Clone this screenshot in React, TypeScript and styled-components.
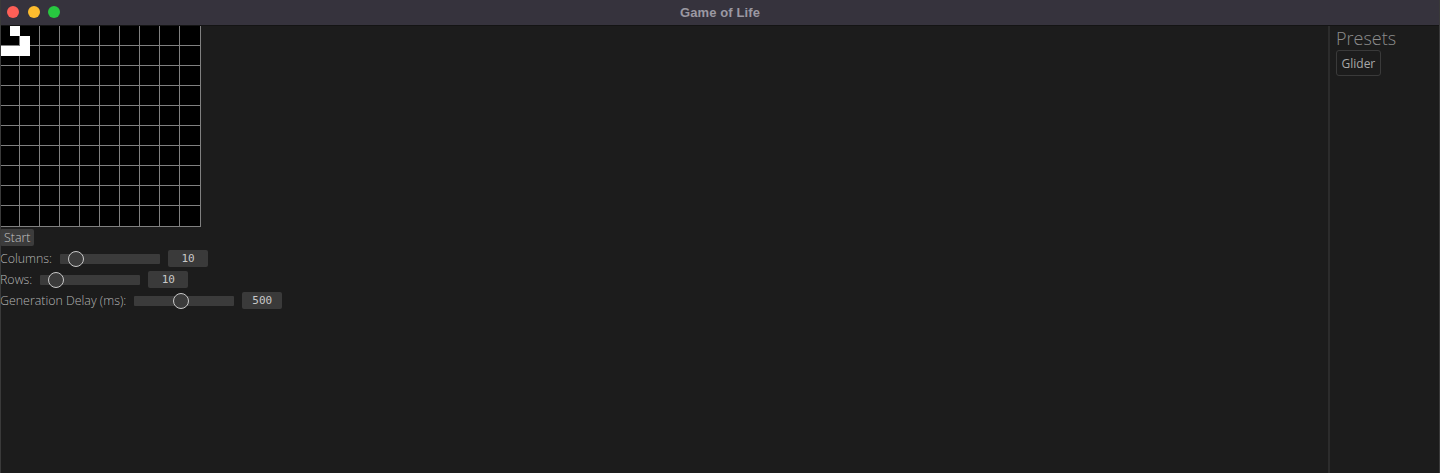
import React, { useState } from "react";
import styled, { createGlobalStyle } from "styled-components";

const GlobalStyle = createGlobalStyle`
  html, body { margin: 0; padding: 0; background: #1c1c1c; }
  body { font-family: "Open Sans", "Noto Sans", sans-serif; }
  * { box-sizing: border-box; }
`;

const Window = styled.div`
  position: relative;
  width: 1440px;
  height: 473px;
  display: flex;
  flex-direction: column;
  background: #1c1c1c;
  overflow: hidden;
  &::after {
    content: "";
    position: absolute;
    inset: 0;
    border-left: 1px solid #3a3a3a;
    border-right: 1px solid #3a3a3a;
    pointer-events: none;
  }
`;

const TitleBar = styled.div`
  position: relative;
  height: 26px;
  flex: none;
  display: flex;
  align-items: center;
  justify-content: center;
  background: #36333d;
  border-bottom: 1px solid #141414;
`;

const Lights = styled.div`
  position: absolute;
  left: 7px;
  top: 6px;
  display: flex;
  gap: 8.6px;
`;

const Light = styled.span<{ $c: string }>`
  width: 12px;
  height: 12px;
  border-radius: 50%;
  background: ${(p) => p.$c};
`;

const Title = styled.div`
  font-family: "Liberation Sans", Arial, sans-serif;
  font-weight: 700;
  font-size: 13px;
  color: #9b98a2;
  letter-spacing: 0.1px;
`;

const Body = styled.div`
  flex: 1;
  display: flex;
  min-height: 0;
`;

const Main = styled.div`
  flex: 1;
  display: flex;
  flex-direction: column;
  align-items: flex-start;
`;

const Sidebar = styled.div`
  width: 112px;
  flex: none;
  border-left: 2px solid #2c2c2c;
  padding: 0 0 0 6px;
  display: flex;
  flex-direction: column;
  align-items: flex-start;
`;

const SideTitle = styled.div`
  font-size: 18px;
  font-weight: 300;
  color: #8c8c8c;
  line-height: 24px;
  margin-top: 0px;
`;

const PresetButton = styled.button`
  margin-top: 0px;
  height: 26px;
  padding: 0 4.5px;
  background: transparent;
  border: 1px solid #3a3a3a;
  border-radius: 3px;
  color: #a8a8a8;
  font-family: inherit;
  font-size: 12px;
  font-weight: 400;
`;

const GridSvg = styled.svg`
  display: block;
  flex: none;
`;

const StartButton = styled.button`
  margin-top: 2px;
  height: 17px;
  padding: 0 4px;
  background: #3c3c3c;
  border: none;
  border-radius: 2px;
  color: #c4c4c4;
  font-family: inherit;
  font-size: 12.4px;
  line-height: 17px;
  font-weight: 300;
`;

const Controls = styled.div`
  margin-top: 4px;
  display: flex;
  flex-direction: column;
  gap: 4px;
`;

const Row = styled.div`
  display: flex;
  align-items: center;
  gap: 8px;
  height: 17px;
`;

const Label = styled.span`
  font-size: 12.4px;
  font-weight: 300;
  color: #b4b4b4;
  white-space: nowrap;
`;

const Slider = styled.input`
  -webkit-appearance: none;
  appearance: none;
  width: 100px;
  height: 10px;
  margin: 0;
  background: #3b3b3b;
  border-radius: 1px;
  outline: none;
  &::-webkit-slider-thumb {
    -webkit-appearance: none;
    appearance: none;
    width: 16px;
    height: 16px;
    border-radius: 50%;
    background: #3b3b3b;
    border: 1.5px solid #c8c8c8;
  }
`;

const NumberBox = styled.div`
  width: 40px;
  height: 17px;
  background: #3a3a3a;
  border-radius: 2px;
  color: #c8c8c8;
  font-family: "DejaVu Sans Mono", monospace;
  font-size: 11px;
  line-height: 17px;
  text-align: center;
`;

const CELL = 10;
const glider: [number, number][] = [
  [1, 0],
  [2, 1],
  [0, 2],
  [1, 2],
  [2, 2],
];

function Grid() {
  const lines = [19, 39, 59, 79, 99, 119, 139, 159, 179, 200];
  return (
    <GridSvg width={201} height={201} viewBox="0 0 201 201">
      <rect x={0} y={0} width={201} height={201} fill="#000" />
      {lines.map((p) => (
        <React.Fragment key={p}>
          <rect x={p} y={0} width={1} height={201} fill="#808080" />
          <rect x={0} y={p} width={201} height={1} fill="#808080" />
        </React.Fragment>
      ))}
      {glider.map(([cx, cy]) => (
        <rect key={`${cx}-${cy}`} x={cx * CELL} y={cy * CELL} width={CELL} height={CELL} fill="#fff" />
      ))}
    </GridSvg>
  );
}

type Ctl = { label: string; min: number; max: number; value: number };

export default function App() {
  const [ctls, setCtls] = useState<Ctl[]>([
    { label: "Columns:", min: 1, max: 96, value: 10 },
    { label: "Rows:", min: 1, max: 96, value: 10 },
    { label: "Generation Delay (ms):", min: 20, max: 1054, value: 500 },
  ]);
  return (
    <>
      <GlobalStyle />
      <Window>
        <TitleBar>
          <Lights>
            <Light $c="#fe5f57" />
            <Light $c="#febc2e" />
            <Light $c="#28c840" />
          </Lights>
          <Title>Game of Life</Title>
        </TitleBar>
        <Body>
          <Main>
            <Grid />
            <StartButton>Start</StartButton>
            <Controls>
              {ctls.map((c, i) => (
                <Row key={c.label}>
                  <Label>{c.label}</Label>
                  <Slider
                    type="range"
                    min={c.min}
                    max={c.max}
                    value={c.value}
                    onChange={(e) => {
                      const v = Number(e.target.value);
                      setCtls((prev) => prev.map((p, j) => (j === i ? { ...p, value: v } : p)));
                    }}
                  />
                  <NumberBox>{c.value}</NumberBox>
                </Row>
              ))}
            </Controls>
          </Main>
          <Sidebar>
            <SideTitle>Presets</SideTitle>
            <PresetButton>Glider</PresetButton>
          </Sidebar>
        </Body>
      </Window>
    </>
  );
}
